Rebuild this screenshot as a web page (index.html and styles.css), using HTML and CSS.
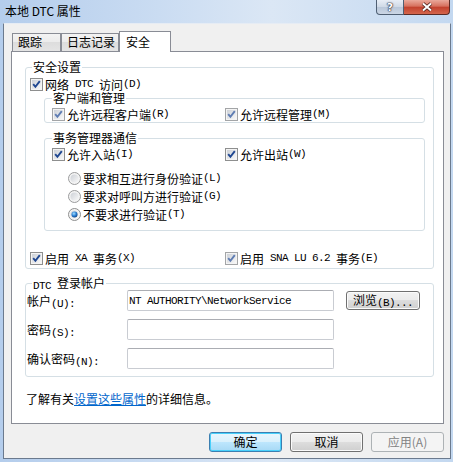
FILE: index.html
```html
<!DOCTYPE html>
<html lang="zh-CN">
<head>
    <meta charset="UTF-8">
    <title>本地 DTC 属性</title>
    <link rel="stylesheet" href="styles.css">
</head>
<body>
    <svg class="defs" width="0" height="0">
        <defs>
            <linearGradient id="boxfill" x1="0" y1="0" x2="1" y2="1">
                <stop offset="0" stop-color="#cdd1d7"/>
                <stop offset="1" stop-color="#f8f8f8"/>
            </linearGradient>
            <radialGradient id="dotfill" cx="0.4" cy="0.35" r="0.7">
                <stop offset="0" stop-color="#a6e0ff"/>
                <stop offset="0.55" stop-color="#2a7fd4"/>
                <stop offset="1" stop-color="#0c3c7c"/>
            </radialGradient>
            <symbol id="chk" viewBox="0 0 13 13">
                <rect x="0.5" y="0.5" width="12" height="12" fill="#f4f4f4" stroke="#8e8f8f"/>
                <rect x="2" y="2" width="9" height="9" fill="url(#boxfill)"/>
                <path d="M3.2 6.2 L5.4 8.8 L9.8 3.2" fill="none" stroke="#1f4791" stroke-width="1.9"/>
            </symbol>
            <symbol id="chk-dim" viewBox="0 0 13 13">
                <rect x="0.5" y="0.5" width="12" height="12" fill="#f4f4f4" stroke="#a3a5a7"/>
                <rect x="2" y="2" width="9" height="9" fill="url(#boxfill)"/>
                <path d="M3.2 6.2 L5.4 8.8 L9.8 3.2" fill="none" stroke="#5f7db3" stroke-width="1.9"/>
            </symbol>
            <symbol id="rad" viewBox="0 0 13 13">
                <circle cx="6.5" cy="6.5" r="6" fill="#f4f4f4" stroke="#9a9b9c"/>
                <circle cx="6.5" cy="6.5" r="4" fill="url(#boxfill)"/>
            </symbol>
            <symbol id="rad-on" viewBox="0 0 13 13">
                <circle cx="6.5" cy="6.5" r="6" fill="#f4f4f4" stroke="#8e8f8f"/>
                <circle cx="6.5" cy="6.5" r="4" fill="url(#boxfill)"/>
                <circle cx="6.5" cy="6.5" r="3" fill="url(#dotfill)"/>
            </symbol>
        </defs>
    </svg>

    <div class="window">
        <div class="titlebar">
            <span class="title">本地 DTC 属性</span>
            <div class="caption">
                <span class="cap help">?</span>
                <span class="cap close">
                    <svg width="12" height="10" viewBox="0 0 12 10">
                        <path d="M2 1.5 L10 8.5 M10 1.5 L2 8.5" stroke="#4a1f19" stroke-width="3.6"/>
                        <path d="M2 1.5 L10 8.5 M10 1.5 L2 8.5" stroke="#fff" stroke-width="2"/>
                    </svg>
                </span>
            </div>
        </div>

        <div class="client">
            <div class="tabs">
                <div class="tab t1">跟踪</div>
                <div class="tab t2">日志记录</div>
                <div class="tab t3 active">安全</div>
            </div>

            <div class="panel">
                <fieldset class="group security">
                    <legend>安全设置</legend>
                    <label class="check net"><svg class="cb"><use href="#chk"/></svg>网络<span class="a"> DTC </span>访问<span class="a">(D)</span></label>

                    <fieldset class="sub clients">
                        <legend>客户端和管理</legend>
                        <div class="pair">
                            <label class="check"><svg class="cb"><use href="#chk-dim"/></svg>允许远程客户端<span class="a">(R)</span></label>
                            <label class="check"><svg class="cb"><use href="#chk-dim"/></svg>允许远程管理<span class="a">(M)</span></label>
                        </div>
                    </fieldset>

                    <fieldset class="sub comm">
                        <legend>事务管理器通信</legend>
                        <div class="pair">
                            <label class="check"><svg class="cb"><use href="#chk"/></svg>允许入站<span class="a">(I)</span></label>
                            <label class="check"><svg class="cb"><use href="#chk"/></svg>允许出站<span class="a">(W)</span></label>
                        </div>
                        <div class="radios">
                            <label class="check"><svg class="cb"><use href="#rad"/></svg>要求相互进行身份验证<span class="a">(L)</span></label>
                            <label class="check"><svg class="cb"><use href="#rad"/></svg>要求对呼叫方进行验证<span class="a">(G)</span></label>
                            <label class="check"><svg class="cb"><use href="#rad-on"/></svg>不要求进行验证<span class="a">(T)</span></label>
                        </div>
                    </fieldset>

                    <div class="pair wide">
                        <label class="check"><svg class="cb"><use href="#chk"/></svg>启用<span class="a"> XA </span>事务<span class="a">(X)</span></label>
                        <label class="check"><svg class="cb"><use href="#chk-dim"/></svg>启用<span class="a"> SNA LU 6.2 </span>事务<span class="a">(E)</span></label>
                    </div>
                </fieldset>

                <fieldset class="group account">
                    <legend><span class="a">DTC </span>登录帐户</legend>
                    <div class="fields">
                        <span class="lbl">帐户<span class="a">(U):</span></span>
                        <input class="text" type="text" value="NT AUTHORITY\NetworkService">
                        <button class="btn browse">浏览<span class="a">(B)...</span></button>

                        <span class="lbl">密码<span class="a">(S):</span></span>
                        <input class="text" type="password">
                        <span></span>

                        <span class="lbl">确认密码<span class="a">(N):</span></span>
                        <input class="text" type="password">
                        <span></span>
                    </div>
                </fieldset>

                <p class="info">了解有关<a href="#">设置这些属性</a>的详细信息。</p>
            </div>

            <div class="actions">
                <button class="btn default">确定</button>
                <button class="btn">取消</button>
                <button class="btn" disabled>应用(A)</button>
            </div>
        </div>
    </div>
</body>
</html>
```

FILE: styles.css
```css
* {
    box-sizing: border-box;
}
body {
    margin: 0;
    font-family: "Noto Sans CJK SC", "Liberation Sans", sans-serif;
    font-size: 12px;
    color: #000;
    background: linear-gradient(90deg, #b4cdec 0%, #cadcf2 35%, #dbe7f5 60%, #c3d8f0 100%);
}
.defs {
    position: absolute;
    width: 0;
    height: 0;
}
.a {
    font-family: "Liberation Mono", monospace;
    font-size: 11px;
    letter-spacing: -0.6px;
    white-space: pre;
    vertical-align: -1px;
}

/* window frame */
.window {
    width: 453px;
    height: 462px;
    display: flex;
    flex-direction: column;
    padding: 0 2px 3px 3px;
}
.titlebar {
    height: 23px;
    display: flex;
    align-items: flex-start;
}
.title {
    padding: 4px 0 0 2px;
    line-height: 14px;
}
.caption {
    margin-left: auto;
    margin-right: 1px;
    display: flex;
}
.cap {
    height: 15px;
    display: flex;
    align-items: center;
    justify-content: center;
    border: 1px solid #4f5f73;
    border-top: none;
}
.help {
    width: 28px;
    border-radius: 0 0 0 4px;
    background: linear-gradient(#e8eef6, #cfd9e6 50%, #b9c7d9 50%, #cbd6e5);
    color: #fff;
    font-family: "DejaVu Sans", sans-serif;
    font-weight: bold;
    font-size: 11px;
    text-shadow: 0 0 1px #223, 0 0 1px #223, 0 0 2px #334;
}
.close {
    width: 46px;
    border-left: none;
    border-color: #5b2b25;
    border-radius: 0 0 4px 0;
    background: linear-gradient(#eaa99b, #d6705d 45%, #c2402d 50%, #d4664c);
}

.client {
    flex: 1;
    background: #f0f0f0;
    border: 1px solid #6b7a8e;
    border-top-color: #e6ecf4;
    padding-top: 7px;
}

/* tabs */
.tabs {
    display: flex;
    align-items: flex-end;
    height: 20px;
    margin-left: 8px;
}
.tab {
    height: 18px;
    border: 1px solid #898c95;
    border-bottom: none;
    padding-top: 1px;
    line-height: 14px;
    background: linear-gradient(#f3f3f3, #ebebeb 50%, #dddddd 50%, #e4e4e4);
}
.t1 {
    width: 49px;
    padding-left: 5px;
}
.t2 {
    width: 58px;
    padding-left: 5px;
}
.t3 {
    width: 52px;
    padding-left: 6px;
}
.tab.active {
    height: 21px;
    margin-bottom: -1px;
    padding-top: 3px;
    background: #fff;
    position: relative;
    z-index: 1;
}
.panel {
    margin-left: 7px;
    width: 433px;
    height: 373px;
    border: 1px solid #898c95;
    background: #fff;
}

/* group boxes */
fieldset {
    min-width: 0;
    margin: 0;
    border: 1px solid #d5dfe5;
    border-radius: 3px;
}
legend {
    padding: 0 1px;
    height: 12px;
    line-height: 12px;
}
.group {
    width: 409px;
    margin-left: 13px;
}
.security {
    margin-top: 9px;
    padding: 0 3px 3px 4px;
}
.security > legend {
    margin-left: 2px;
}
.sub {
    width: 381px;
    margin-left: 14px;
    padding: 0 3px 1px 7px;
}
.sub > legend {
    margin-left: 0;
}
.comm {
    margin-top: 9px;
    padding-bottom: 9px;
}
.check {
    display: flex;
    align-items: center;
    height: 13px;
    line-height: 13px;
    white-space: nowrap;
}
.cb {
    width: 13px;
    height: 13px;
    flex: none;
    margin-right: 2px;
}
.net {
    margin-top: 5px;
    margin-bottom: 1px;
}
.pair {
    display: grid;
    grid-template-columns: 173px auto;
    margin-top: 4px;
}
.pair.wide {
    grid-template-columns: 195px auto;
    margin-top: 21px;
}
.radios {
    display: flex;
    flex-direction: column;
    gap: 5px;
    margin: 11px 0 0 16px;
}

.account {
    margin-top: 8px;
    padding: 0 3px 7px 1px;
}
.account > legend {
    margin-left: 5px;
}
.fields {
    display: grid;
    grid-template-columns: 100px 207px 74px;
    grid-auto-rows: 21px;
    row-gap: 8px;
    align-items: center;
    margin-top: 1px;
}
.text {
    width: 207px;
    height: 21px;
    margin: 0;
    padding: 0 1px;
    border: 1px solid #c9ccd2;
    border-top-color: #abadb3;
    border-radius: 2px;
    font: 11px "Liberation Mono", monospace;
    letter-spacing: -0.6px;
    color: #000;
    background: #fff;
}

/* buttons */
.btn {
    width: 73px;
    height: 20px;
    margin: 0;
    padding: 0;
    border: 1px solid #707070;
    border-radius: 3px;
    background: linear-gradient(#f2f2f2, #ebebeb 50%, #dddddd 50%, #cfcfcf);
    box-shadow: inset 0 0 0 1px #fbfbfb;
    font-family: inherit;
    font-size: 12px;
    line-height: 16px;
    color: #000;
}
.browse {
    width: 74px;
    height: 19px;
    margin-left: 12px;
}
.btn.default {
    border-color: #3c7fb1;
    background: linear-gradient(#eaf6fd, #d9f0fc 50%, #bee6fd 50%, #a7d9f5);
    box-shadow: inset 0 0 0 1px #48d0fb;
}
.btn:disabled {
    border-color: #adb2b5;
    background: #f4f4f4;
    box-shadow: none;
    color: #838383;
}

.info {
    margin: 15px 0 0 14px;
    line-height: 13px;
}
.info a {
    color: #0066cc;
}
.actions {
    display: flex;
    justify-content: flex-end;
    gap: 8px;
    margin: 8px 6px 0 0;
}
```
